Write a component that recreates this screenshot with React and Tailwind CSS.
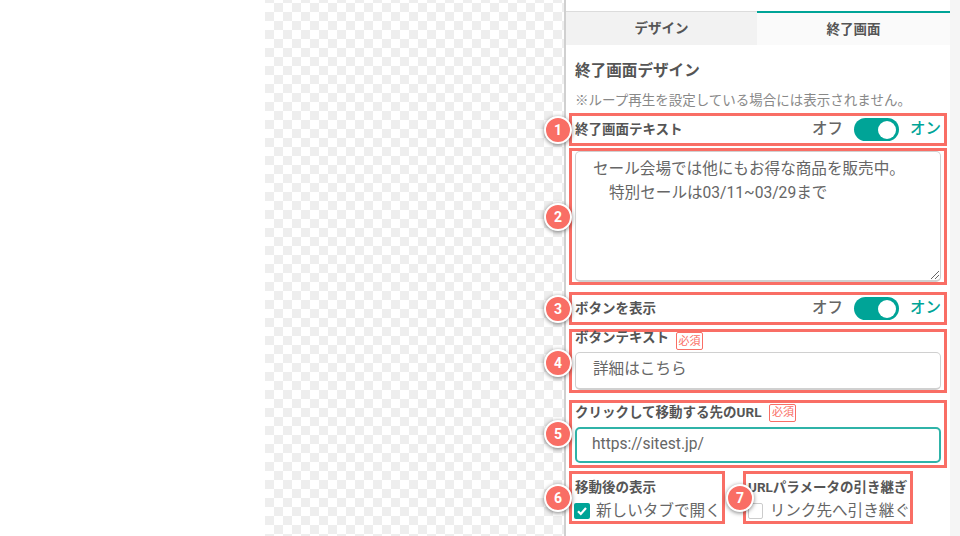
const jp = "font-['Roboto','Noto_Sans_CJK_JP',sans-serif]";

function Badge({ n, className = "left-[-28px]" }) {
  return (
    <span className={`absolute ${className} top-1/2 -translate-y-1/2 w-[28px] h-[28px] rounded-full bg-[#f96e65] border-2 border-white shadow-[0_1px_4px_rgba(0,0,0,0.5)] text-white text-[14px] font-bold flex items-center justify-center leading-none`}>
      {n}
    </span>
  );
}

function Toggle() {
  return (
    <div className="flex items-center text-[15.5px] font-medium">
      <span className="text-[#666]">オフ</span>
      <span className="ml-[11px] w-[45px] h-[23px] rounded-full bg-[#00a497] flex items-center justify-end pr-[3px]">
        <span className="w-[18px] h-[18px] rounded-full bg-white" />
      </span>
      <span className="ml-[11px] text-[#00a497]">オン</span>
    </div>
  );
}

function Required() {
  return (
    <span className="border border-[#f96e65] rounded-[2px] text-[#f96e65] text-[11px] h-[18px] w-[27px] flex items-center justify-center leading-none">
      必須
    </span>
  );
}

export default function App() {
  return (
    <div className={`w-[960px] h-[536px] overflow-hidden flex bg-white ${jp}`}>
      <div className="w-[265px] shrink-0 bg-white" />
      <div className="w-[299px] shrink-0 bg-[repeating-conic-gradient(#eeeeee_0%_25%,#ffffff_0%_50%)] bg-[length:18px_18px] bg-[position:0_3px]" />
      <div className="w-[386px] shrink-0 border-l-2 border-[#d0d0d0] bg-white flex flex-col">
        <div className="h-[11px] shrink-0" />
        <div className="flex h-[34px] shrink-0 text-[13.5px] font-bold text-[#555]">
          <div className="w-[191px] bg-[#f2f2f2] border-t border-[#dcdcdc] flex items-center justify-center">デザイン</div>
          <div className="flex-1 bg-[#fafafa] border-t-2 border-[#00a497] flex items-center justify-center">終了画面</div>
        </div>
        <div className="pl-[9px] pr-[4px] flex flex-col">
          <h2 className="text-[15.6px] font-bold text-[#555] mt-[16px] leading-[20px]">終了画面デザイン</h2>
          <p className="text-[13.5px] text-[#888] mt-[10px] leading-[18px] whitespace-nowrap">※ループ再生を設定している場合には表示されません。</p>
          <div className="relative mt-[4px] -ml-[6px] mr-[-1px] h-[33px] border-[3px] border-[#f96e65] pl-[3px] pr-[3px] flex items-center justify-between">
            <Badge n={1} />
            <span className="text-[13.5px] font-bold text-[#555]">終了画面テキスト</span>
            <Toggle />
          </div>
          <div className="relative mt-[2px] -ml-[6px] mr-[-1px] h-[137px] border-[3px] border-[#f96e65] px-[3px]">
            <Badge n={2} />
            <div className="relative h-full border border-b-2 border-[#d0d0d0] rounded-[5px] pl-[17px] pt-[5px] text-[15.6px] leading-[24px] text-[#666]">
              <div>セール会場では他にもお得な商品を販売中。</div>
              <div className="pl-[16px]">特別セールは03/11~03/29まで</div>
              <svg className="absolute right-0 bottom-0" width="10" height="10" viewBox="0 0 10 10" fill="none" stroke="#666" strokeWidth="1">
                <path d="M1 9 L9 1 M5 9 L9 5" />
              </svg>
            </div>
          </div>
          <div className="relative mt-[7px] -ml-[6px] mr-[-1px] h-[33px] border-[3px] border-[#f96e65] pl-[3px] pr-[3px] flex items-center justify-between">
            <Badge n={3} />
            <span className="text-[13.5px] font-bold text-[#555]">ボタンを表示</span>
            <Toggle />
          </div>
          <div className="relative mt-[4px] -ml-[6px] mr-[-1px] h-[64px] border-[3px] border-[#f96e65] px-[3px] flex flex-col">
            <Badge n={4} className="left-[-28px] mt-[2px]" />
            <div className="flex items-start gap-[7px] h-[16px]">
              <span className="text-[13.5px] font-bold text-[#555] leading-[10px]">ボタンテキスト</span>
              <Required />
            </div>
            <div className="mt-[4px] h-[38px] border border-b-2 border-[#d0d0d0] rounded-[5px] pl-[17px] pb-[2px] flex items-center text-[15.6px] text-[#666]">詳細はこちら</div>
          </div>
          <div className="relative mt-[7px] -ml-[6px] mr-[-1px] h-[68px] border-[3px] border-[#f96e65] px-[3px] flex flex-col">
            <Badge n={5} />
            <div className="flex items-center gap-[8px] h-[19px]">
              <span className="text-[13.5px] font-bold text-[#555]">クリックして移動する先のURL</span>
              <Required />
            </div>
            <div className="mt-[5px] h-[36px] border-2 border-[#2fb3a8] rounded-[5px] pl-[15px] flex items-center text-[15.6px] text-[#666]">https://sitest.jp/</div>
          </div>
          <div className="flex mt-[3px] -ml-[6px]">
            <div className="relative w-[156px] h-[53px] border-[3px] border-[#f96e65] pl-[3px] flex flex-col">
              <Badge n={6} />
              <div className="text-[13.5px] font-bold text-[#555] mt-[4px] leading-[18px]">移動後の表示</div>
              <div className="flex items-center gap-[6px] mt-[5px] -ml-[1px] text-[15.6px] text-[#666] leading-[20px] whitespace-nowrap">
                <span className="w-[16px] h-[16px] rounded-[2px] bg-[#00a497] flex items-center justify-center">
                  <svg width="12" height="12" viewBox="0 0 12 12" fill="none" stroke="#fff" strokeWidth="2.2"><path d="M2 6.2 L4.8 9 L10 3" /></svg>
                </span>
                新しいタブで開く
              </div>
            </div>
            <div className="relative ml-[18px] w-[170px] h-[53px] border-[3px] border-[#f96e65] pl-[2px] flex flex-col">
              <Badge n={7} className="left-[-20px]" />
              <div className="text-[13.5px] font-bold text-[#555] mt-[4px] leading-[18px] whitespace-nowrap">URLパラメータの引き継ぎ</div>
              <div className="flex items-center gap-[7px] mt-[5px] text-[15.6px] text-[#666] leading-[20px] whitespace-nowrap">
                <span className="w-[16px] h-[16px] rounded-[2px] bg-white border border-[#cccccc]" />
                リンク先へ引き継ぐ
              </div>
            </div>
          </div>
        </div>
      </div>
      <div className="flex-1 bg-[#f5f5f5]" />
    </div>
  );
}
